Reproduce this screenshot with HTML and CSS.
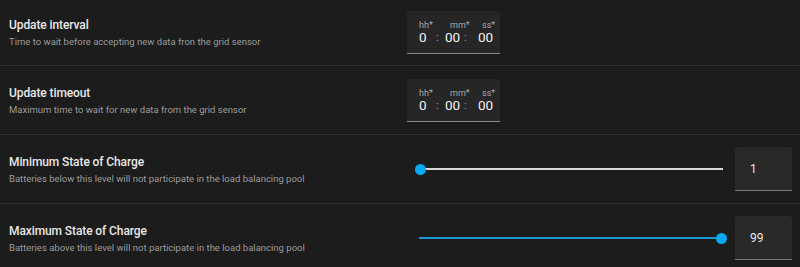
FILE: index.html
```html
<!DOCTYPE html>
<html lang="en">
<head>
  <meta charset="UTF-8" />
  <title>Battery settings</title>
  <link rel="stylesheet" href="styles.css">
</head>
<body>
  <div class="settings">
    <div class="row first">
      <div class="info">
        <div class="title">Update interval</div>
        <div class="desc">Time to wait before accepting new data fron the grid sensor</div>
      </div>
      <div class="control">
        <div class="time">
          <div class="labels"><span class="l-h">hh*</span><span class="l-m">mm*</span><span>ss*</span></div>
          <div class="digits"><span class="d-h">0</span><span class="colon">:</span><span class="d-m">00</span><span class="colon c2">:</span><span>00</span></div>
        </div>
      </div>
    </div>
    <div class="row">
      <div class="info">
        <div class="title">Update timeout</div>
        <div class="desc">Maximum time to wait for new data from the grid sensor</div>
      </div>
      <div class="control">
        <div class="time">
          <div class="labels"><span class="l-h">hh*</span><span class="l-m">mm*</span><span>ss*</span></div>
          <div class="digits"><span class="d-h">0</span><span class="colon">:</span><span class="d-m">00</span><span class="colon c2">:</span><span>00</span></div>
        </div>
      </div>
    </div>
    <div class="row">
      <div class="info">
        <div class="title">Minimum State of Charge</div>
        <div class="desc">Batteries below this level will not participate in the load balancing pool</div>
      </div>
      <div class="control slider-box">
        <div class="slider">
          <div class="track"></div>
          <div class="fill" style="width: 0%"></div>
          <div class="thumb" style="left: 0%"></div>
        </div>
        <div class="num">1</div>
      </div>
    </div>
    <div class="row">
      <div class="info">
        <div class="title">Maximum State of Charge</div>
        <div class="desc">Batteries above this level will not participate in the load balancing pool</div>
      </div>
      <div class="control slider-box">
        <div class="slider">
          <div class="track"></div>
          <div class="fill" style="width: 99%"></div>
          <div class="thumb" style="left: 99%"></div>
        </div>
        <div class="num">99</div>
      </div>
    </div>
  </div>
</body>
</html>
```
FILE: styles.css
```css
body {
  margin: 0;
  background: #1c1c1c;
  font-family: Roboto, "Noto Sans", sans-serif;
  color: #e1e1e1;
  overflow: hidden;
}
.row {
  display: grid;
  grid-template-columns: 398px 1fr;
  align-items: center;
  height: 68px;
  padding: 0 8px 0 9px;
  border-bottom: 1px solid #2e2e2e;
}
.row.first { height: 65px; }
.title {
  font-size: 12px;
  font-weight: 500;
  color: #e8e8e8;
  letter-spacing: -0.1px;
}
.desc {
  margin-top: 4px;
  font-size: 9.5px;
  color: #9b9b9b;
}

/* time picker */
.time {
  width: 93px;
  height: 43px;
  box-sizing: border-box;
  padding: 9px 0 0 12px;
  background: #262626;
  border-bottom: 1px solid #8a8a8a;
  border-radius: 3px 3px 0 0;
  white-space: nowrap;
}
.labels {
  display: flex;
  font-size: 9px;
  line-height: 10px;
  color: #a8a8a8;
}
.l-h { width: 31px; }
.l-m { width: 32px; }
.digits {
  display: flex;
  margin-top: 0;
  font-size: 13.5px;
  line-height: 15px;
  color: #f2f2f2;
}
.d-h { width: 17px; }
.colon { width: 9px; color: #9b9b9b; font-size: 11px; }
.d-m { width: 19px; }
.colon.c2 { width: 14px; }

/* slider */
.slider-box {
  display: flex;
  align-items: center;
  padding-left: 12px;
}
.slider {
  position: relative;
  flex: 1;
  height: 10px;
  margin-right: 12px;
}
.track {
  position: absolute;
  left: 0;
  right: 0;
  top: 4px;
  height: 2px;
  background: #d8d8d8;
}
.fill {
  position: absolute;
  left: 0;
  top: 4px;
  height: 2px;
  background: #1a9bd6;
}
.thumb {
  position: absolute;
  top: 0;
  width: 11px;
  height: 11px;
  margin-left: -4px;
  border-radius: 50%;
  background: #03a9f4;
}
.num {
  width: 57px;
  height: 44px;
  box-sizing: border-box;
  padding: 15px 0 0 15px;
  background: #292929;
  border-bottom: 1px solid #777;
  border-radius: 3px 3px 0 0;
  font-size: 12px;
  color: #e6e6e6;
}
```
